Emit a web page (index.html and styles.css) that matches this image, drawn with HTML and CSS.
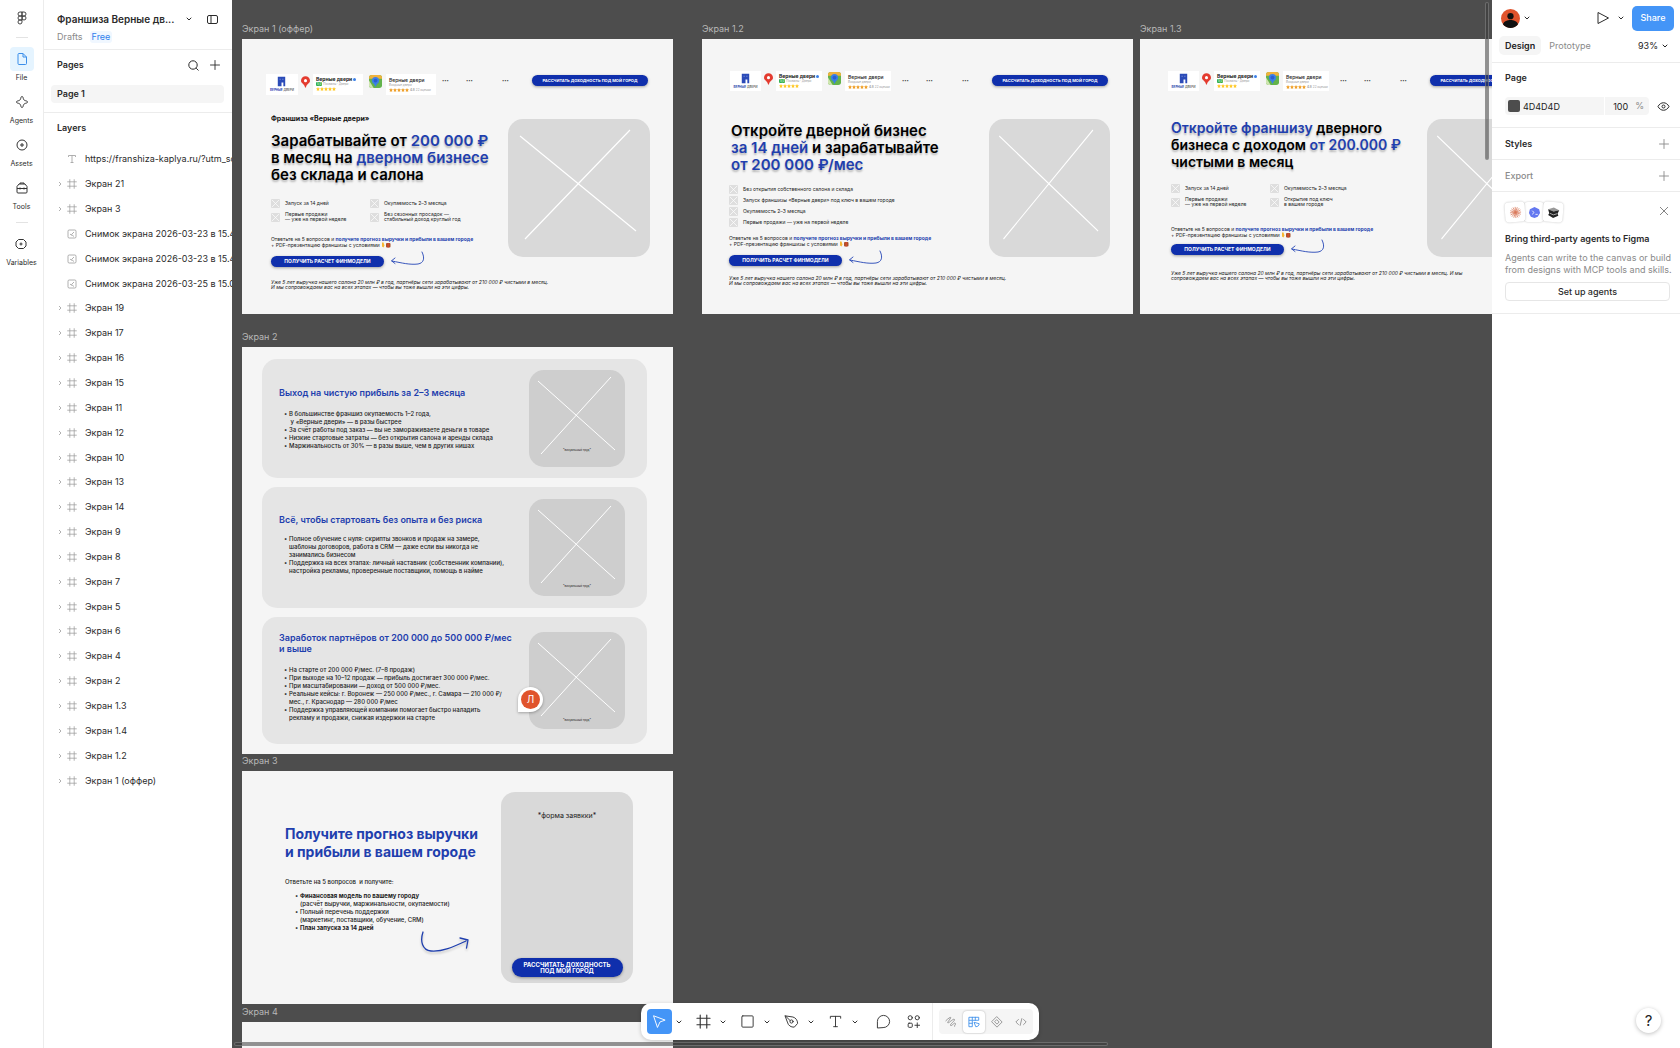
FILE: index.html
```html
<!DOCTYPE html>
<html lang="ru">
<head>
<meta charset="utf-8">
<title>Франшиза Верные двери</title>
<link rel="stylesheet" href="styles.css">
</head>
<body>
<svg class="sprite" aria-hidden="true">
  <symbol id="chev" viewBox="0 0 8 8"><path d="M2 3l2 2 2-2" fill="none" stroke="currentColor" stroke-linecap="round" stroke-linejoin="round"/></symbol>
  <symbol id="plus" viewBox="0 0 12 12"><path d="M6 1.500v9M1.500 6h9" fill="none" stroke="currentColor" stroke-width=".9" stroke-linecap="round"/></symbol>
  <symbol id="caret" viewBox="0 0 6 8"><path d="M2 2l2 2-2 2" fill="none" stroke="currentColor" stroke-width=".8"/></symbol>
  <symbol id="frame" viewBox="0 0 16 16"><path d="M4.500 1v14M11.500 1v14M1 4.500h14M1 11.500h14" fill="none" stroke="currentColor" stroke-width="1.200" stroke-linecap="round"/></symbol>
  <symbol id="pic" viewBox="0 0 10 10"><rect x="1" y="1" width="8" height="8" rx="1.200" fill="none" stroke="currentColor" stroke-width=".8"/><path d="M3 5l1.800 1.500M7 3L4.500 5.500l2.500 2" fill="none" stroke="currentColor" stroke-width=".8"/></symbol>
  <symbol id="cross" viewBox="0 0 142 138" preserveAspectRatio="none"><path d="M12 17L128 112M122 11L17 120" fill="none" stroke="#fff" stroke-width="1.200"/></symbol>
  <symbol id="cross2" viewBox="0 0 96 97"><path d="M9 11l77 69M82 7L12 84" fill="none" stroke="#fff" stroke-width="1"/></symbol>
  <symbol id="tick" viewBox="0 0 9 9"><rect width="9" height="9" rx="1" fill="#dedede"/><path d="M1 1l7 7M8 1L1 8" stroke="#fff" stroke-width=".7"/></symbol>
  <symbol id="swoosh" viewBox="0 0 36 16"><path d="M32 1c3 6 2 11-4 12-8 1-16-1-26-3M5 7L1.500 9.800 5 12.500" fill="none" stroke="#2445b5" stroke-width=".9" stroke-linecap="round"/></symbol>
  <symbol id="gift" viewBox="0 0 10 6"><path d="M1 .5h1.500l1 3-1 2-1.500-1z" fill="#f7b733"/><rect x="5" y="1" width="4.500" height="4.500" rx="1" fill="#a8512b"/><path d="M7.200 1v4.500" stroke="#e8452c"/></symbol>
  <symbol id="logo" viewBox="0 0 32 14"><path d="M12 2h8v10h-2V8h-2v4h-4z" fill="#2b4bb8"/><path d="M14 4h1v1h-1zM17 4h1v1h-1z" fill="#8fa2e0"/></symbol>
  <symbol id="pin" viewBox="0 0 10 13"><path d="M5 0a5 5 0 0 1 5 5c0 3-4 3.500-4.500 7.500h-1C4 8.500 0 8 0 5a5 5 0 0 1 5-5z" fill="#e43b2f"/><circle cx="5" cy="5" r="1.700" fill="#fff"/></symbol>
  <symbol id="map" viewBox="0 0 14 14"><rect width="14" height="14" rx="3" fill="#63b34b"/><path d="M3 0h8a3 3 0 0 1 3 3v1H0V3a3 3 0 0 1 3-3z" fill="#f0b23c"/><path d="M0 6l5 8H3a3 3 0 0 1-3-3z" fill="#cfe5b0"/><circle cx="7" cy="6" r="3.800" fill="#3b7fe8"/><path d="M5 9h4l-2 4z" fill="#3b7fe8"/><circle cx="7" cy="6" r="2" fill="#2c5fd0"/></symbol>
  <symbol id="stars" viewBox="0 0 50 10"><path id="st" d="M5 0l1.500 3.300 3.500.4-2.600 2.400.7 3.600L5 8 1.900 9.700l.7-3.600L0 3.700l3.500-.4z"/><use href="#st" x="10"/><use href="#st" x="20"/><use href="#st" x="30"/><use href="#st" x="40"/></symbol>
</svg>

<div class="app">
  <nav class="rail" aria-label="Разделы">
    <svg class="figma" viewBox="0 0 10 14"><path d="M5 1H3a2 2 0 0 0 0 4h2zM5 1h2a2 2 0 0 1 0 4H5zM5 5H3a2 2 0 0 0 0 4h2zM5 9H3a2 2 0 1 0 2 2z" fill="none" stroke="#333" stroke-width=".9"/><circle cx="7" cy="7" r="2" fill="none" stroke="#333" stroke-width=".9"/></svg>
    <hr>
    <button class="rail-item on"><span class="rail-icon"><svg viewBox="0 0 14 14"><path d="M3 2.500a1 1 0 0 1 1-1h4l3.500 3.500v6.500a1 1 0 0 1-1 1H4a1 1 0 0 1-1-1zM8 1.500V5h3.500"/></svg></span>File</button>
    <button class="rail-item"><span class="rail-icon"><svg viewBox="0 0 14 14"><path d="M7 1.500c.8 0 1 .8 1.300 2 .4 1.400.9 1.900 2.200 2.200 1.300.4 2 .5 2 1.300s-.7 1-2 1.300c-1.300.4-1.800.9-2.200 2.200-.3 1.200-.5 2-1.300 2s-1-.8-1.300-2c-.4-1.300-.9-1.800-2.200-2.200-1.300-.3-2-.5-2-1.300s.7-.9 2-1.300c1.300-.3 1.800-.8 2.200-2.200.3-1.200.5-2 1.300-2z"/></svg></span>Agents</button>
    <button class="rail-item"><span class="rail-icon"><svg viewBox="0 0 14 14"><circle cx="7" cy="7" r="5"/><path d="M7 5v4M5 7h4"/></svg></span>Assets</button>
    <button class="rail-item"><span class="rail-icon"><svg viewBox="0 0 14 14"><path d="M2 5.500L4 3h6l2 2.500V11a1 1 0 0 1-1 1H3a1 1 0 0 1-1-1zM5 3V2h4v1M2 7.500h10M5 6.500v2M9 6.500v2"/></svg></span>Tools</button>
    <hr>
    <button class="rail-item"><span class="rail-icon"><svg viewBox="0 0 14 14"><path d="M4.500 2.500h5L12 5v4l-2.500 2.500h-5L2 9V5z"/><circle cx="7" cy="7" r="1"/></svg></span>Variables</button>
  </nav>

  <aside class="side">
    <header class="file-head">
      <div class="file-row">
        <h1>Франшиза Верные дв...</h1>
        <button class="ib" aria-label="Меню файла"><svg class="i8"><use href="#chev"/></svg></button>
        <button class="ib" aria-label="Свернуть панель"><svg class="i13" viewBox="0 0 13 13"><rect x="1.500" y="2.500" width="10" height="8" rx="1.500" fill="none" stroke="currentColor"/><path d="M5 2.500v8" stroke="currentColor"/></svg></button>
      </div>
      <div class="file-meta"><a href="#drafts">Drafts</a><span class="free">Free</span></div>
    </header>
    <section class="pages">
      <div class="pages-head"><h2>Pages</h2>
        <button class="ib" aria-label="Поиск"><svg class="i13" viewBox="0 0 13 13"><circle cx="6" cy="6" r="4.200" fill="none" stroke="currentColor"/><path d="M9.200 9.200L11.500 11.500" stroke="currentColor"/></svg></button>
        <button class="ib" aria-label="Добавить страницу"><svg class="i12"><use href="#plus"/></svg></button>
      </div>
      <button class="page-row">Page 1</button>
    </section>
    <section class="layers">
      <h2>Layers</h2>
      <ul>
        <li class="leaf"><svg viewBox="0 0 10 10"><path d="M1.500 3V1.500h7V3M5 1.500v7M3.500 8.500h3" fill="none" stroke="currentColor" stroke-width=".8"/></svg>https://franshiza-kaplya.ru/?utm_sou</li>
        <li><svg class="car"><use href="#caret"/></svg><svg><use href="#frame"/></svg>Экран 21</li>
        <li><svg class="car"><use href="#caret"/></svg><svg><use href="#frame"/></svg>Экран 3</li>
        <li class="leaf"><svg><use href="#pic"/></svg>Снимок экрана 2026-03-23 в 15.47</li>
        <li class="leaf"><svg><use href="#pic"/></svg>Снимок экрана 2026-03-23 в 15.46</li>
        <li class="leaf"><svg><use href="#pic"/></svg>Снимок экрана 2026-03-25 в 15.06</li>
        <li><svg class="car"><use href="#caret"/></svg><svg><use href="#frame"/></svg>Экран 19</li>
        <li><svg class="car"><use href="#caret"/></svg><svg><use href="#frame"/></svg>Экран 17</li>
        <li><svg class="car"><use href="#caret"/></svg><svg><use href="#frame"/></svg>Экран 16</li>
        <li><svg class="car"><use href="#caret"/></svg><svg><use href="#frame"/></svg>Экран 15</li>
        <li><svg class="car"><use href="#caret"/></svg><svg><use href="#frame"/></svg>Экран 11</li>
        <li><svg class="car"><use href="#caret"/></svg><svg><use href="#frame"/></svg>Экран 12</li>
        <li><svg class="car"><use href="#caret"/></svg><svg><use href="#frame"/></svg>Экран 10</li>
        <li><svg class="car"><use href="#caret"/></svg><svg><use href="#frame"/></svg>Экран 13</li>
        <li><svg class="car"><use href="#caret"/></svg><svg><use href="#frame"/></svg>Экран 14</li>
        <li><svg class="car"><use href="#caret"/></svg><svg><use href="#frame"/></svg>Экран 9</li>
        <li><svg class="car"><use href="#caret"/></svg><svg><use href="#frame"/></svg>Экран 8</li>
        <li><svg class="car"><use href="#caret"/></svg><svg><use href="#frame"/></svg>Экран 7</li>
        <li><svg class="car"><use href="#caret"/></svg><svg><use href="#frame"/></svg>Экран 5</li>
        <li><svg class="car"><use href="#caret"/></svg><svg><use href="#frame"/></svg>Экран 6</li>
        <li><svg class="car"><use href="#caret"/></svg><svg><use href="#frame"/></svg>Экран 4</li>
        <li><svg class="car"><use href="#caret"/></svg><svg><use href="#frame"/></svg>Экран 2</li>
        <li><svg class="car"><use href="#caret"/></svg><svg><use href="#frame"/></svg>Экран 1.3</li>
        <li><svg class="car"><use href="#caret"/></svg><svg><use href="#frame"/></svg>Экран 1.4</li>
        <li><svg class="car"><use href="#caret"/></svg><svg><use href="#frame"/></svg>Экран 1.2</li>
        <li><svg class="car"><use href="#caret"/></svg><svg><use href="#frame"/></svg>Экран 1 (оффер)</li>
      </ul>
    </section>
  </aside>

  <main class="canvas">
    <section class="node n1">
      <h3>Экран 1 (оффер)</h3>
      <div class="board offer offer-1">
        <div class="top">
          <div class="brands">
            <span class="brand logo"><svg><use href="#logo"/></svg><b>ВЕРНЫЕ</b> ДВЕРИ</span>
            <svg class="pin"><use href="#pin"/></svg>
            <span class="brand yx"><strong>Верные двери <i class="dot"></i></strong><span><i class="tag">5,0</i> Похвалы · Двери</span><svg class="stars y"><use href="#stars"/></svg></span>
            <svg class="map"><use href="#map"/></svg>
            <span class="brand gis"><strong>Верные двери</strong><span>Входные двери</span><em><svg class="stars o"><use href="#stars"/></svg><b>4.8</b> 22 оценки</em></span>
          </div>
          <div class="menu"><span>•••</span><span>•••</span><span>•••</span></div>
          <button class="cta">РАССЧИТАТЬ ДОХОДНОСТЬ ПОД МОЙ ГОРОД</button>
        </div>
        <div class="hero">
          <div class="copy">
            <h4>Франшиза «Верные двери»</h4>
            <h2>Зарабатывайте от <mark>200 000 ₽</mark><br>в месяц на <mark>дверном бизнесе</mark><br>без склада и салона</h2>
            <ul class="feats two">
              <li><svg><use href="#tick"/></svg><span>Запуск за 14 дней</span></li>
              <li><svg><use href="#tick"/></svg><span>Окупаемость 2–3 месяца</span></li>
              <li><svg><use href="#tick"/></svg><span>Первые продажи<br>— уже на первой неделе</span></li>
              <li><svg><use href="#tick"/></svg><span>Без сезонных просадок —<br>стабильный доход круглый год</span></li>
            </ul>
            <p class="ask">Ответьте на 5 вопросов и <mark>получите прогноз выручки и прибыли в вашем городе</mark><br>+ PDF-презентацию франшизы с условиями<svg class="gift"><use href="#gift"/></svg></p>
            <div class="act"><button class="cta">ПОЛУЧИТЬ РАСЧЕТ ФИНМОДЕЛИ</button><svg class="swoosh"><use href="#swoosh"/></svg></div>
            <p class="note">Уже 5 лет выручка нашего салона 20 млн ₽ в год, партнёры сети зарабатывают от 210 000 ₽ чистыми в месяц.<br>И мы сопровождаем вас на всех этапах — чтобы вы тоже вышли на эти цифры.</p>
          </div>
          <svg class="ph"><use href="#cross"/></svg>
        </div>
      </div>
    </section>

    <section class="node n12">
      <h3>Экран 1.2</h3>
      <div class="board offer offer-2">
        <div class="top">
          <div class="brands">
            <span class="brand logo"><svg><use href="#logo"/></svg><b>ВЕРНЫЕ</b> ДВЕРИ</span>
            <svg class="pin"><use href="#pin"/></svg>
            <span class="brand yx"><strong>Верные двери <i class="dot"></i></strong><span><i class="tag">5,0</i> Похвалы · Двери</span><svg class="stars y"><use href="#stars"/></svg></span>
            <svg class="map"><use href="#map"/></svg>
            <span class="brand gis"><strong>Верные двери</strong><span>Входные двери</span><em><svg class="stars o"><use href="#stars"/></svg><b>4.8</b> 22 оценки</em></span>
          </div>
          <div class="menu"><span>•••</span><span>•••</span><span>•••</span></div>
          <button class="cta">РАССЧИТАТЬ ДОХОДНОСТЬ ПОД МОЙ ГОРОД</button>
        </div>
        <div class="hero">
          <div class="copy">
            <h2>Откройте дверной бизнес<br><mark>за 14 дней</mark> и зарабатывайте<br><mark>от 200 000 ₽/мес</mark></h2>
            <ul class="feats">
              <li><svg><use href="#tick"/></svg><span>Без открытия собственного салона и склада</span></li>
              <li><svg><use href="#tick"/></svg><span>Запуск франшизы «Верные двери» под ключ в вашем городе</span></li>
              <li><svg><use href="#tick"/></svg><span>Окупаемость 2–3 месяца</span></li>
              <li><svg><use href="#tick"/></svg><span>Первые продажи — уже на первой неделе</span></li>
            </ul>
            <p class="ask">Ответьте на 5 вопросов и <mark>получите прогноз выручки и прибыли в вашем городе</mark><br>+ PDF-презентацию франшизы с условиями<svg class="gift"><use href="#gift"/></svg></p>
            <div class="act"><button class="cta">ПОЛУЧИТЬ РАСЧЕТ ФИНМОДЕЛИ</button><svg class="swoosh"><use href="#swoosh"/></svg></div>
            <p class="note">Уже 5 лет выручка нашего салона 20 млн ₽ в год, партнёры сети зарабатывают от 210 000 ₽ чистыми в месяц.<br>И мы сопровождаем вас на всех этапах — чтобы вы тоже вышли на эти цифры.</p>
          </div>
          <svg class="ph"><use href="#cross"/></svg>
        </div>
      </div>
    </section>

    <section class="node n13">
      <h3>Экран 1.3</h3>
      <div class="board offer offer-3">
        <div class="top">
          <div class="brands">
            <span class="brand logo"><svg><use href="#logo"/></svg><b>ВЕРНЫЕ</b> ДВЕРИ</span>
            <svg class="pin"><use href="#pin"/></svg>
            <span class="brand yx"><strong>Верные двери <i class="dot"></i></strong><span><i class="tag">5,0</i> Похвалы · Двери</span><svg class="stars y"><use href="#stars"/></svg></span>
            <svg class="map"><use href="#map"/></svg>
            <span class="brand gis"><strong>Верные двери</strong><span>Входные двери</span><em><svg class="stars o"><use href="#stars"/></svg><b>4.8</b> 22 оценки</em></span>
          </div>
          <div class="menu"><span>•••</span><span>•••</span><span>•••</span></div>
          <button class="cta">РАССЧИТАТЬ ДОХОДНОСТЬ ПОД МОЙ ГОРОД</button>
        </div>
        <div class="hero">
          <div class="copy">
            <h2><mark>Откройте франшизу</mark> дверного<br>бизнеса с доходом <mark>от 200.000 ₽</mark><br>чистыми в месяц</h2>
            <ul class="feats two">
              <li><svg><use href="#tick"/></svg><span>Запуск за 14 дней</span></li>
              <li><svg><use href="#tick"/></svg><span>Окупаемость 2–3 месяца</span></li>
              <li><svg><use href="#tick"/></svg><span>Первые продажи<br>— уже на первой неделе</span></li>
              <li><svg><use href="#tick"/></svg><span>Открытие под ключ<br>в вашем городе</span></li>
            </ul>
            <p class="ask">Ответьте на 5 вопросов и <mark>получите прогноз выручки и прибыли в вашем городе</mark><br>+ PDF-презентацию франшизы с условиями<svg class="gift"><use href="#gift"/></svg></p>
            <div class="act"><button class="cta">ПОЛУЧИТЬ РАСЧЕТ ФИНМОДЕЛИ</button><svg class="swoosh"><use href="#swoosh"/></svg></div>
            <p class="note">Уже 5 лет выручка нашего салона 20 млн ₽ в год, партнёры сети зарабатывают от 210 000 ₽ чистыми в месяц. И мы<br>сопровождаем вас на всех этапах — чтобы вы тоже вышли на эти цифры.</p>
          </div>
          <svg class="ph"><use href="#cross"/></svg>
        </div>
      </div>
    </section>

    <section class="node n2">
      <h3>Экран 2</h3>
      <div class="board cards">
        <article class="card c1">
          <div>
            <h4>Выход на чистую прибыль за 2–3 месяца</h4>
            <ul><li>В большинстве франшиз окупаемость 1–2 года,<br>&nbsp;у «Верные двери» — в разы быстрее</li><li>За счёт работы под заказ — вы не замораживаете деньги в товаре</li><li>Низкие стартовые затраты — без открытия салона и аренды склада</li><li>Маржинальность от 30% — в разы выше, чем в других нишах</li></ul>
          </div>
          <figure><svg><use href="#cross2"/></svg><figcaption>*визуальный труд*</figcaption></figure>
        </article>
        <article class="card c2">
          <div>
            <h4>Всё, чтобы стартовать без опыта и без риска</h4>
            <ul><li>Полное обучение с нуля: скрипты звонков и продаж на замере,<br>шаблоны договоров, работа в CRM — даже если вы никогда не<br>занимались бизнесом</li><li>Поддержка на всех этапах: личный наставник (собственник компании),<br>настройка рекламы, проверенные поставщики, помощь в найме</li></ul>
          </div>
          <figure><svg><use href="#cross2"/></svg><figcaption>*визуальный труд*</figcaption></figure>
        </article>
        <article class="card c3">
          <div>
            <h4>Заработок партнёров от 200 000 до 500 000 ₽/мес<br>и выше</h4>
            <ul><li>На старте от 200 000 ₽/мес. (7–8 продаж)</li><li>При выходе на 10–12 продаж — прибыль достигает 300 000 ₽/мес.</li><li>При масштабировании — доход от 500 000 ₽/мес.</li><li>Реальные кейсы: г. Воронеж — 250 000 ₽/мес., г. Самара — 210 000 ₽/<br>мес., г. Краснодар — 280 000 ₽/мес</li><li>Поддержка управляющей компании помогает быстро наладить<br>рекламу и продажи, снижая издержки на старте</li></ul>
          </div>
          <figure><svg><use href="#cross2"/></svg><figcaption>*визуальный труд*</figcaption></figure>
        </article>
      </div>
    </section>

    <section class="node n3">
      <h3>Экран 3</h3>
      <div class="board quiz">
        <div class="quiz-copy">
          <h2>Получите прогноз выручки<br>и прибыли в вашем городе</h2>
          <p>Ответьте на 5 вопросов&nbsp; и получите:</p>
          <ul><li><b>Финансовая модель по вашему городу</b><br>(расчёт выручки, маржинальности, окупаемости)</li><li>Полный перечень поддержки<br>(маркетинг, поставщики, обучение, CRM)</li><li><b>План запуска за 14 дней</b></li></ul>
          <svg class="hook" viewBox="0 0 50 26"><path d="M4 3C1 12 3 21 12 22c11 1 22-4 35-10M41 9l8 2-1.500 8" fill="none" stroke="#1f3fae" stroke-width="1.300" stroke-linecap="round" stroke-linejoin="round"/></svg>
        </div>
        <div class="form"><p>*форма заявкки*</p><button class="cta">РАССЧИТАТЬ ДОХОДНОСТЬ<br>ПОД МОЙ ГОРОД</button></div>
      </div>
    </section>

    <section class="node n4"><h3>Экран 4</h3><div class="board"></div></section>

    <button class="comment" aria-label="Комментарий"><span>Л</span></button>
    <i class="scroll-v"></i><i class="scroll-h"></i>
  </main>

  <aside class="props">
    <div class="props-top">
      <svg class="avatar" viewBox="0 0 20 20"><circle cx="10" cy="10" r="10" fill="#e0532c"/><circle cx="10" cy="7.500" r="3.300" fill="#111"/><path d="M2 16c1-3.500 5-4.500 8-4.500s7 1 8 4.500a10 10 0 0 1-16 0z" fill="#111"/></svg>
      <button class="ib" aria-label="Профиль"><svg class="i8"><use href="#chev"/></svg></button>
      <button class="ib play" aria-label="Просмотр"><svg class="i14" viewBox="0 0 14 14"><path d="M2 1.500l10.500 5.500L2 12.500z" fill="none" stroke="currentColor" stroke-linejoin="round"/></svg></button>
      <button class="ib" aria-label="Варианты просмотра"><svg class="i8"><use href="#chev"/></svg></button>
      <button class="share">Share</button>
    </div>
    <div class="tabs"><button class="on">Design</button><button>Prototype</button><button class="zoom">93%<svg class="i8"><use href="#chev"/></svg></button></div>
    <section class="page-props">
      <h2>Page</h2>
      <div class="fill-row">
        <div class="fill"><i></i><input class="hex" value="4D4D4D" aria-label="Цвет"><input class="op" value="100" aria-label="Непрозрачность"><span>%</span></div>
        <button class="ib" aria-label="Видимость"><svg class="i13" viewBox="0 0 13 13"><path d="M1 6.500c2.500-5 8.500-5 11 0-2.500 5-8.500 5-11 0z" fill="none" stroke="currentColor"/><circle cx="6.500" cy="6.500" r="1.500" fill="none" stroke="currentColor"/></svg></button>
      </div>
    </section>
    <section class="row"><h2>Styles</h2><button class="ib dim" aria-label="Добавить стиль"><svg class="i12"><use href="#plus"/></svg></button></section>
    <section class="row"><h2 class="dim">Export</h2><button class="ib dim" aria-label="Добавить экспорт"><svg class="i12"><use href="#plus"/></svg></button></section>
    <section class="promo">
      <div class="promo-top">
        <span class="tile t1"><svg viewBox="0 0 14 14"><path d="M7 1v12M1 7h12M2.800 2.800l8.400 8.400M11.200 2.800l-8.400 8.400M4.700 1.500l4.600 11M1.500 9.300l11-4.600M9.300 1.500l-4.600 11M1.500 4.700l11 4.600" stroke="#d97757" stroke-width=".8"/></svg></span>
        <span class="tile t2"><svg viewBox="0 0 14 14"><path d="M7 1l5 2.500 1 4-2.500 4L7 13l-4-1.500-2-4 1-4z" fill="#6478f0"/><path d="M4.500 5L6.500 7l-2 2M8 9h2.500" stroke="#fff" fill="none" stroke-width=".9"/></svg></span>
        <span class="tile t3"><svg viewBox="0 0 14 14"><path d="M1 4l6-2.500L13 4 7 6z" fill="#999"/><path d="M1 4l6 2 6-2-1.500 4 1 2-5.500 3-5.500-3 1-2z" fill="#222"/><path d="M3 8l4 1.500L11 8" stroke="#ccc" fill="none" stroke-width=".8"/></svg></span>
        <button class="ib" aria-label="Закрыть"><svg class="i12" viewBox="0 0 12 12"><path d="M2 2l8 8M10 2l-8 8" stroke="#777" stroke-width=".9"/></svg></button>
      </div>
      <h2>Bring third-party agents to Figma</h2>
      <p>Agents can write to the canvas or build from designs with MCP tools and skills.</p>
      <button class="setup">Set up agents</button>
    </section>
  </aside>

  <div class="toolbar" role="toolbar">
    <button class="tool sel" aria-label="Move"><svg viewBox="0 0 16 16"><path d="M2 2l12 4.500-5.500 2L6 14z"/></svg></button><button class="more" aria-label="Ещё"><svg class="i8"><use href="#chev"/></svg></button>
    <button class="tool" aria-label="Frame"><svg><use href="#frame"/></svg></button><button class="more" aria-label="Ещё"><svg class="i8"><use href="#chev"/></svg></button>
    <button class="tool" aria-label="Rectangle"><svg viewBox="0 0 16 16"><rect x="2" y="2" width="12" height="12" rx="1"/></svg></button><button class="more" aria-label="Ещё"><svg class="i8"><use href="#chev"/></svg></button>
    <button class="tool" aria-label="Pen"><svg viewBox="0 0 16 16"><path d="M1.500 2l8 1.200c3 .8 5 3.500 5 6.800L11 14c-3.500.2-6.500-1.500-7.300-5zM1.500 2l5 5"/><circle cx="8" cy="8" r="1.700"/></svg></button><button class="more" aria-label="Ещё"><svg class="i8"><use href="#chev"/></svg></button>
    <button class="tool" aria-label="Text"><svg viewBox="0 0 16 16"><path d="M2.500 4.500V2.500h11v2M8 2.500v11M6 13.500h4"/></svg></button><button class="more" aria-label="Ещё"><svg class="i8"><use href="#chev"/></svg></button>
    <button class="tool note-tool" aria-label="Comment"><svg viewBox="0 0 16 16"><path d="M1.500 14.500V8A6.500 6.500 0 1 1 8 14.500z"/></svg></button>
    <button class="tool" aria-label="Actions"><svg viewBox="0 0 16 16"><circle cx="4.500" cy="4" r="2.200"/><circle cx="12" cy="4" r="2.200"/><rect x="2.300" y="9.800" width="4.400" height="4.400" rx="1"/><path d="M12 9.500v5M9.500 12h5"/></svg></button>
    <div class="modes">
      <button aria-label="Draw"><svg viewBox="0 0 14 14"><path d="M1 5.500c3.500-3.500 6.500-5 5.500-3C5.500 4.500 2 8 3.500 8S10 2.500 11 4 5.500 9.500 6.500 11s4.500-4 5.500-2.500-1.500 2.500-1 3.500"/></svg></button>
      <button class="on" aria-label="Design"><svg viewBox="0 0 14 14"><path d="M1.500 1.500h11v3.500H5v7.500H1.500zM5 1.500V5H1.500M8.500 1.500V5M1.500 8.500H5M7.500 7.500l5.500 1.500c0 2-1.500 3.500-3.500 3.500z"/></svg></button>
      <button aria-label="Handoff"><svg viewBox="0 0 14 14"><path d="M7 1L13 7l-6 6-6-6zM7 4.500L9.500 7 7 9.500 4.500 7z"/></svg></button>
      <button aria-label="Dev"><svg viewBox="0 0 14 14"><path d="M4 4L1 7l3 3M10 4l3 3-3 3M8 3l-2 8"/></svg></button>
    </div>
  </div>
  <button class="help" aria-label="Справка">?</button>
</div>
</body>
</html>
```
FILE: styles.css
```css
* { box-sizing: border-box; }
body { margin: 0; font: 9px/12px Inter, "Noto Sans", sans-serif; color: #2b2b2b; background: #fff; }
h1, h2, h3, h4, p, ul, figure { margin: 0; padding: 0; }
ul { list-style: none; }
button { font: inherit; color: inherit; border: 0; background: none; padding: 0; }
mark { background: none; color: #1f3fae; }
svg { display: block; flex: none; }
.sprite { position: absolute; width: 0; height: 0; }
.app { display: grid; grid-template-columns: 44px 188px minmax(0, 1fr) 188px; height: 100vh; overflow: hidden; }
.i8 { width: 8px; height: 8px; }
.i12 { width: 12px; height: 12px; }
.i13 { width: 13px; height: 13px; }
.i14 { width: 14px; height: 14px; }
.ib { display: flex; align-items: center; justify-content: center; }
.dim { color: #8a8a8a; }

/* left rail */
.rail { display: flex; flex-direction: column; align-items: center; border-right: 1px solid #ececec; padding-top: 11px; }
.figma { width: 10px; height: 14px; }
.rail hr { width: 12px; border: 0; border-top: 1px solid #e3e3e3; margin: 12px 0 9px; }
.rail-item { display: flex; flex-direction: column; align-items: center; font-size: 7px; line-height: 12px; margin-bottom: 6px; }
.rail-icon { display: grid; place-items: center; width: 24px; height: 24px; border-radius: 4px; margin-bottom: 1px; }
.rail-item svg { width: 14px; height: 14px; fill: none; stroke: #333; }
.rail-item.on .rail-icon { background: #e5f4ff; }
.rail-item.on svg { stroke: #3b8eea; }
.rail .rail-item + hr { margin: 3px 0 9px; }

/* file panel */
.side { overflow: hidden; white-space: nowrap; }
.file-head { height: 50px; padding: 12px 14px 0 13px; border-bottom: 1px solid #ececec; }
.file-row { display: flex; align-items: center; gap: 11px; }
.file-row h1 { font-size: 10px; line-height: 14px; font-weight: 600; width: 117px; }
.file-row .ib:last-child { margin-left: 2px; }
.file-meta { display: flex; gap: 7px; margin-top: 5px; }
.file-meta a { color: #8a8a8a; text-decoration: none; }
.free { color: #2f80ed; background: #f0f7ff; border-radius: 3px; padding: 0 2px; }
h2 { font-size: 9px; line-height: 12px; font-weight: 600; }
.pages { padding: 8px 8px 9px 7px; border-bottom: 1px solid #ececec; }
.pages-head { display: flex; align-items: center; gap: 9px; height: 14px; padding: 0 3px 0 6px; margin-bottom: 13px; }
.pages-head h2 { flex: 1; }
.page-row { display: block; width: 100%; height: 18px; padding-left: 6px; text-align: left; font-weight: 600; background: #f5f5f5; border-radius: 4px; }
.layers h2 { padding: 9px 13px 0; }
.layers ul { display: grid; grid-auto-rows: 1fr; min-height: 646px; margin-top: 13px; padding-left: 13px; }
.layers li { display: flex; align-items: center; }
.layers li svg { width: 10px; height: 10px; color: #9c9c9c; margin-right: 8px; }
.layers li .car { width: 6px; height: 8px; margin-right: 4px; }
.layers .leaf { padding-left: 10px; }

/* canvas */
.canvas { position: relative; overflow: hidden; background: #4d4d4d; }
.node { position: absolute; width: 431px; }
.node h3 { font-size: 9px; line-height: 12px; font-weight: 400; color: #b8b8b8; margin-bottom: 4px; }
.n1 { left: 10px; top: 23px; }
.n12 { left: 470px; top: 23px; }
.n13 { left: 908px; top: 23px; }
.n2 { left: 10px; top: 331px; }
.n3 { left: 10px; top: 755px; }
.n4 { left: 10px; top: 1006px; }
.board { background: #f5f5f5; min-height: 200px; white-space: nowrap; color: #222; }
.cta { background: #0f2fac; color: #fff; font-weight: 700; border-radius: 10px; box-shadow: 0 1px 3px rgba(0, 0, 0, .35); }

/* offer boards */
.offer { height: 275px; padding-top: 32px; }
.top { display: flex; align-items: flex-start; height: 24px; padding: 0 25px 0 28px; }
.brands { display: flex; align-items: flex-start; gap: 3px; width: 172px; }
.brand { display: flex; flex-direction: column; background: #fff; height: 20px; width: 46px; padding: 2px 0 0 3px; font-size: 3px; line-height: 5px; color: #999; overflow: hidden; }
.brand strong { font-size: 5px; line-height: 6px; color: #222; }
.brand.logo { display: block; width: 31px; padding: 1px 0 0; text-align: center; color: #222; }
.brand.logo svg { width: 31px; height: 13px; }
.brand.logo b { color: #1f3fae; }
.brand.gis { padding-top: 3px; margin-left: 1px; }
.brand.gis strong { font-weight: 500; }
.brand em { display: flex; gap: 1px; font-style: normal; }
.dot { display: inline-block; width: 3px; height: 3px; border-radius: 50%; background: #3b7fe8; }
.tag { background: #34b04a; color: #fff; font-style: normal; border-radius: 1px; padding: 0 1px; }
.stars { width: 20px; height: 4px; }
.stars.y { fill: #ffc928; }
.stars.o { fill: #efa02a; }
.pin { width: 9px; height: 12px; margin-top: 2px; }
.map { width: 13px; height: 13px; margin: 1px 0 0 3px; }
.offer-1 .top { padding-left: 24px; }
.offer-1 .brands { margin-top: 3px; width: 176px; }
.offer-1 .brand { width: 50px; height: 21px; }
.offer-1 .brand.logo { width: 32px; }
.menu { display: flex; flex: 1; font-size: 4px; line-height: 6px; padding-top: 7px; color: #444; }
.menu span { width: 24px; }
.menu span:nth-child(2) { width: 36px; }
.top .cta { width: 116px; height: 11px; margin-top: 4px; font-size: 4px; line-height: 11px; }
.hero { display: grid; grid-template-columns: 237px 142px; padding-left: 29px; }
.copy { padding-top: 19px; min-width: 0; }
.copy h4 { font-size: 7px; line-height: 10px; font-weight: 700; margin-bottom: 8px; color: #111; }
.copy h2 { font-size: 15px; line-height: 17px; font-weight: 600; color: #000; text-shadow: 0 2px 2px rgba(0, 0, 0, .25); }
.ph { width: 142px; height: 138px; margin-top: 24px; border-radius: 15px; background: #d9d9d9; }
.feats { display: grid; row-gap: 2px; margin: 16px 0 0; font-size: 5px; line-height: 5px; }
.feats.two { grid-template-columns: 99px 1fr; row-gap: 4px; }
.feats li { display: flex; align-items: center; gap: 5px; }
.feats svg { width: 9px; height: 9px; }
.ask { font-size: 5px; line-height: 6px; margin-top: 14px; }
.ask mark { font-weight: 700; }
.gift { display: inline-block; width: 10px; height: 6px; margin: 0 0 -1px 1px; }
.act { display: flex; align-items: flex-start; gap: 6px; height: 12px; margin-top: 8px; }
.act .cta { width: 113px; height: 11px; font-size: 5px; line-height: 11px; }
.swoosh { width: 36px; height: 16px; margin-top: -5px; }
.note { font-size: 5px; line-height: 5px; font-style: italic; margin-top: 12px; }
.offer-2 .hero { grid-template-columns: 260px 121px; padding-left: 27px; }
.offer-2 .copy { padding-top: 27px; }
.offer-2 .copy h2 { padding-left: 2px; }
.offer-2 .feats { margin-top: 12px; }
.offer-2 .ask { margin-top: 8px; }
.offer-2 .note { margin-top: 9px; }
.offer-2 .ph, .offer-3 .ph { width: 121px; }
.offer-3 .hero { grid-template-columns: 256px 121px; padding-left: 31px; }
.offer-3 .copy { padding-top: 24px; }
.offer-3 .copy h2 { font-size: 14px; }
.offer-3 .feats { margin-top: 14px; }
.offer-3 .ask { line-height: 5px; margin-top: 20px; }
.offer-3 .act { margin-top: 6px; }
.offer-3 .note { margin-top: 15px; }

/* benefit cards */
.cards { min-height: 407px; padding: 12px 26px 0 20px; display: flex; flex-direction: column; gap: 9px; }
.card { display: flex; justify-content: space-between; align-items: flex-start; height: 119px; padding: 28px 22px 0 17px; background: #e5e5e5; border-radius: 15px; }
.card h4 { font-size: 9px; line-height: 11px; font-weight: 600; color: #1f3fae; }
.card div { width: 250px; }
.card ul, .quiz ul { padding-left: 10px; font-size: 6px; line-height: 8px; font-weight: 500; margin-top: 12px; }
.card li::before, .quiz li::before { content: "•"; display: inline-block; width: 5px; margin-left: -5px; }
.card figure { position: relative; width: 96px; height: 97px; margin-top: -17px; border-radius: 15px; background: #cecece; }
.card figure svg { width: 96px; height: 97px; }
.card figcaption { position: absolute; inset: auto 0 15px; text-align: center; font-size: 3px; line-height: 4px; }
.card.c2 { height: 121px; padding-top: 27px; }
.c2 ul { margin-top: 10px; }
.card.c2 figure { margin-top: -15px; }
.c2 figcaption { bottom: 8px; }
.c3 figcaption { bottom: 7px; }
.card.c3 { height: 127px; padding-top: 15px; }
.card.c3 figure { margin-top: 0; }

/* quiz board */
.quiz { display: flex; min-height: 233px; padding: 21px 40px 0 43px; justify-content: space-between; }
.quiz-copy { padding-top: 33px; }
.quiz h2 { font-size: 14px; line-height: 18px; font-weight: 700; color: #1f3fae; }
.quiz p { font-size: 6px; line-height: 8px; font-weight: 500; margin-top: 17px; }
.quiz ul { padding-left: 15px; margin-top: 6px; }
.quiz .hook { width: 50px; height: 26px; margin: -3px 0 0 134px; filter: drop-shadow(0 2px 1px rgba(0, 0, 0, .2)); }
.form { display: flex; flex-direction: column; justify-content: space-between; align-items: center; width: 132px; height: 191px; padding: 3px 0 6px; border-radius: 14px; background: #d9d9d9; }
.quiz .form p { font-size: 7px; font-weight: 400; }
.form .cta { width: 111px; height: 19px; font-size: 6px; line-height: 6px; }

/* canvas overlays */
.comment { position: absolute; left: 286px; top: 687px; width: 25px; height: 25px; padding: 3px; border-radius: 13px 13px 13px 0; background: #fff; box-shadow: 0 1px 3px rgba(0, 0, 0, .3); }
.comment span { display: block; height: 19px; border-radius: 50%; background: #e0532c; color: #fff; font-size: 10px; line-height: 19px; }
.scroll-v { position: absolute; right: 3px; top: 2px; width: 4px; height: 158px; border-radius: 2px; background: rgba(60, 60, 60, .55); border: 1px solid rgba(150, 150, 150, .5); }
.scroll-h { position: absolute; left: 2px; bottom: 2px; width: 874px; height: 4px; border-radius: 2px; background: rgba(60, 60, 60, .55); border: 1px solid rgba(150, 150, 150, .5); }

/* right panel */
.props section { border-bottom: 1px solid #ececec; }
.props-top { display: flex; align-items: center; height: 36px; padding: 0 6px 0 9px; }
.avatar { width: 19px; height: 19px; margin-right: 3px; }
.play { margin-left: auto; margin-right: 7px; }
.share { width: 42px; height: 25px; margin-left: 7px; border-radius: 5px; background: #4495f7; color: #fff; font-weight: 500; }
.tabs { display: flex; height: 27px; padding: 0 11px 7px 7px; border-bottom: 1px solid #ececec; color: #8a8a8a; }
.tabs button { display: flex; align-items: center; gap: 3px; padding: 0 6px; border-radius: 5px; }
.tabs .on { background: #f5f5f5; color: #222; font-weight: 600; margin-right: 2px; }
.tabs .zoom { margin-left: auto; padding: 0; color: #222; }
.page-props { height: 65px; padding: 9px 10px 0 13px; }
.fill-row { display: flex; align-items: center; justify-content: space-between; margin-top: 13px; }
.fill { display: flex; align-items: center; width: 144px; height: 18px; padding: 0 5px 0 3px; background: #f5f5f5; border-radius: 4px; color: #8a8a8a; }
.fill i { width: 12px; height: 12px; background: #4d4d4d; border-radius: 2px; margin-right: 3px; }
.fill input { font: inherit; color: #222; border: 0; background: none; padding: 0; height: 18px; min-width: 0; }
.fill .hex { flex: 1; }
.fill .op { width: 31px; padding-left: 8px; border-left: 1px solid #fff; }
.row { display: flex; align-items: center; justify-content: space-between; height: 32px; padding: 0 10px 0 13px; }
.row h2.dim { font-weight: 500; }
.promo { padding: 10px 10px 12px 13px; }
.promo-top { display: flex; height: 22px; align-items: flex-start; }
.promo-top .ib { margin: 3px 0 0 auto; }
.tile { display: grid; place-items: center; width: 20px; height: 20px; margin-right: -1px; border-radius: 4px; background: #fff; box-shadow: 0 0 2px rgba(0, 0, 0, .25); }
.tile svg { width: 13px; height: 13px; }
.t1 { transform: rotate(-4deg); }
.t3 { transform: rotate(4deg); }
.promo h2 { margin-top: 9px; }
.promo p { color: #8a8a8a; margin-top: 7px; margin-right: -8px; }
.setup { width: 100%; height: 19px; margin-top: 6px; border: 1px solid #e6e6e6; border-radius: 4px; font-weight: 500; }

/* floating controls */
.toolbar { position: absolute; left: 50%; bottom: 8px; transform: translateX(-50%); display: flex; align-items: center; height: 37px; padding: 0 6px; border-radius: 10px; background: #fff; box-shadow: 0 1px 4px rgba(0, 0, 0, .2); }
.tool { display: grid; place-items: center; width: 25px; height: 25px; border-radius: 4px; color: #333; }
.tool svg { width: 15px; height: 15px; }
.tool svg, .modes svg { fill: none; stroke: currentColor; stroke-linejoin: round; stroke-linecap: round; }
.tool.sel { background: #4495f7; color: #fff; }
.more { display: grid; place-items: center; width: 13px; height: 25px; margin-right: 6px; color: #333; }
.note-tool { margin: 0 5px 0 4px; }
.modes { display: flex; align-items: center; height: 25px; margin-left: 13px; background: #f5f5f5; border-radius: 4px; position: relative; }
.modes::before { content: ""; position: absolute; left: -7px; top: -6px; height: 37px; border-left: 1px solid #ececec; }
.modes button { display: grid; place-items: center; width: 24px; height: 25px; border-radius: 4px; color: #8a8a8a; }
.modes button.on { width: 22px; height: 22px; background: #fff; color: #3b8eea; box-shadow: 0 0 2px rgba(0, 0, 0, .3); }
.modes svg { width: 12px; height: 12px; }
.help { position: absolute; right: 19px; bottom: 15px; width: 25px; height: 25px; border-radius: 50%; background: #fff; box-shadow: 0 1px 4px rgba(0, 0, 0, .25); font-size: 15px; color: #222; }
```
